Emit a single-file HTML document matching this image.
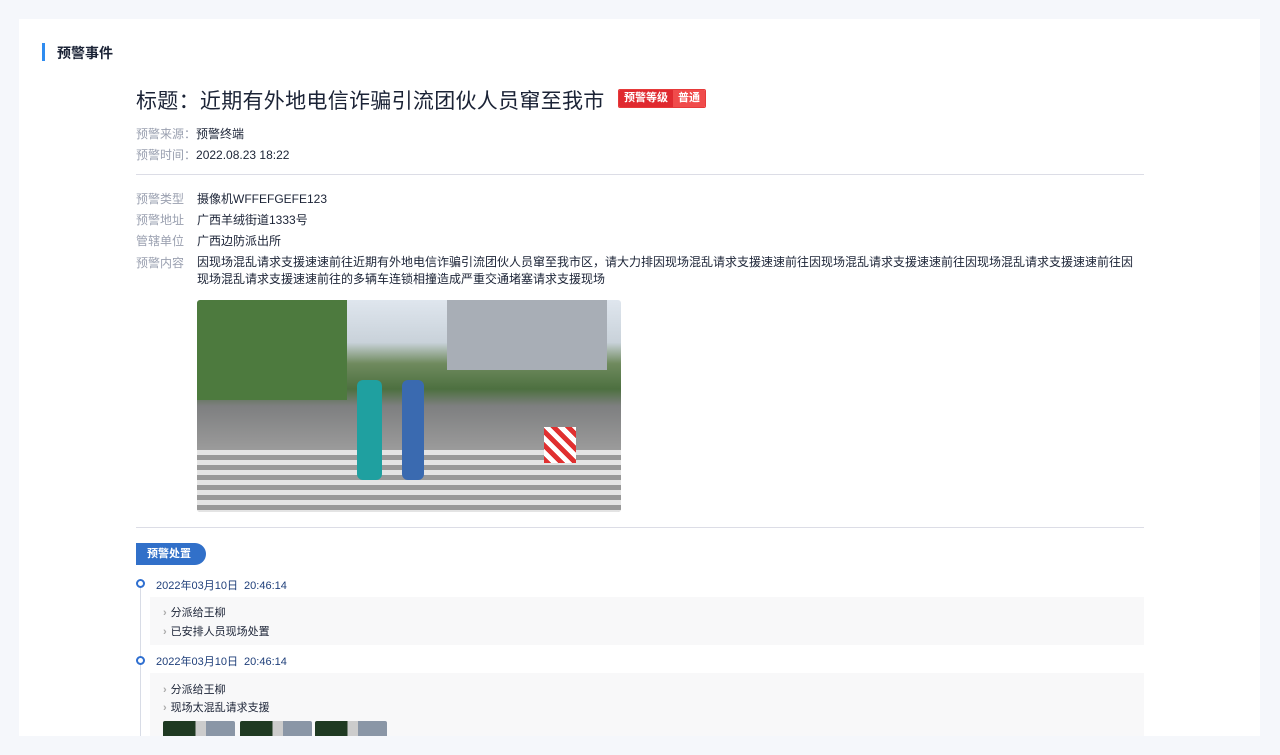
<!DOCTYPE html>
<html><head><meta charset="utf-8"><style>
*{margin:0;padding:0;box-sizing:border-box}
body{width:1280px;height:755px;background:#f5f7fb;font-family:"Liberation Sans","Noto Sans CJK SC",sans-serif;position:relative;overflow:hidden;color:#1b2336}
.card{position:absolute;left:19px;top:19px;width:1241px;height:717px;background:#fff}
.a{position:absolute;white-space:nowrap}
.lbl{color:#9aa0b0;font-size:12px}
.val{color:#1b2336;font-size:12px}
.hr{position:absolute;left:136px;width:1008px;height:1px;background:#dcdde6}
.tl{position:absolute;left:140px;width:1px;background:#d8dce6}
.dot{position:absolute;left:136px;width:9px;height:9px;border:2px solid #2f6fd0;border-radius:50%;background:#fff}
.box{position:absolute;left:150px;width:994px;background:#f8f8f9}
.it{position:absolute;left:163px;font-size:11px;color:#1b2336;white-space:nowrap}
.it:before{content:"›";color:#aaa;margin-right:4px;font-weight:bold}
.th{position:absolute;top:721px;width:72px;height:20px;background:linear-gradient(90deg,#1f3a22 0 45%,#ccc 45% 60%,#8a96a6 60%);border-radius:2px}
</style></head><body>
<div class="card"></div>
<div class="a" style="left:42px;top:43px;width:3px;height:18px;background:#2f8cf0"></div>
<div class="a" style="left:57px;top:43px;font-size:14px;color:#1b2336;font-weight:bold">预警事件</div>
<div class="a" style="left:136px;top:85px;font-size:21px;color:#1b2336;letter-spacing:0.3px">标题：近期有外地电信诈骗引流团伙人员窜至我市</div>
<div class="a" style="left:618px;top:89px;width:88px;height:19px;border:1px solid #e63a3a;border-radius:2px;display:flex;font-size:11px;color:#fff;line-height:17px;font-weight:bold;overflow:hidden">
<span style="background:#e0292f;padding:0 5px">预警等级</span><span style="background:#f04b4b;padding:0 5px;flex:1">普通</span></div>
<div class="a lbl" style="left:136px;top:125px">预警来源：<span class="val">预警终端</span></div>
<div class="a lbl" style="left:136px;top:146px">预警时间：<span class="val">2022.08.23 18:22</span></div>
<div class="hr" style="top:174px"></div>
<div class="a lbl" style="left:136px;top:190px">预警类型</div><div class="a val" style="left:197px;top:190px">摄像机WFFEFGEFE123</div>
<div class="a lbl" style="left:136px;top:211px">预警地址</div><div class="a val" style="left:197px;top:211px">广西羊绒街道1333号</div>
<div class="a lbl" style="left:136px;top:232px">管辖单位</div><div class="a val" style="left:197px;top:232px">广西边防派出所</div>
<div class="a lbl" style="left:136px;top:254px">预警内容</div>
<div class="a val" style="left:197px;top:254px;line-height:17px">因现场混乱请求支援速速前往近期有外地电信诈骗引流团伙人员窜至我市区，请大力排因现场混乱请求支援速速前往因现场混乱请求支援速速前往因现场混乱请求支援速速前往因<br>现场混乱请求支援速速前往的多辆车连锁相撞造成严重交通堵塞请求支援现场</div>
<div class="a" style="left:197px;top:300px;width:424px;height:212px;border-radius:3px;overflow:hidden;background:linear-gradient(180deg,#dfe6ee 0%,#c9d2da 20%,#6f8a5e 30%,#4d7040 42%,#7e7f80 50%,#9a9a9a 70%,#bdbdbd 100%)">
<div style="position:absolute;left:250px;top:0;width:160px;height:70px;background:#a8aeb6"></div>
<div style="position:absolute;left:0;top:0;width:150px;height:100px;background:#4d7a3e"></div>
<div style="position:absolute;left:0;top:150px;width:424px;height:62px;background:repeating-linear-gradient(180deg,#e4e4e4 0 5px,#999 5px 10px)"></div>
<div style="position:absolute;left:160px;top:80px;width:25px;height:100px;background:#1fa0a0;border-radius:6px"></div>
<div style="position:absolute;left:205px;top:80px;width:22px;height:100px;background:#3a6ab0;border-radius:6px"></div>
<div style="position:absolute;left:347px;top:127px;width:32px;height:36px;background:repeating-linear-gradient(45deg,#e03030 0 5px,#fff 5px 10px)"></div>
</div>
<div class="hr" style="top:527px"></div>
<div class="a" style="left:136px;top:543px;width:70px;height:22px;background:#3170c9;border-radius:0 11px 11px 0;color:#fff;font-size:11px;line-height:22px;padding-left:11px;font-weight:bold">预警处置</div>
<div class="tl" style="top:587px;height:168px"></div>
<div class="dot" style="top:579px"></div>
<div class="a" style="left:156px;top:577px;font-size:11px;color:#1f3f7a">2022年03月10日&nbsp;&nbsp;20:46:14</div>
<div class="box" style="top:597px;height:48px"></div>
<div class="it" style="top:604px">分派给王柳</div>
<div class="it" style="top:623px">已安排人员现场处置</div>
<div class="dot" style="top:656px"></div>
<div class="a" style="left:156px;top:653px;font-size:11px;color:#1f3f7a">2022年03月10日&nbsp;&nbsp;20:46:14</div>
<div class="box" style="top:673px;height:82px"></div>
<div class="it" style="top:681px">分派给王柳</div>
<div class="it" style="top:699px">现场太混乱请求支援</div>
<div class="th" style="left:163px"></div><div class="th" style="left:240px"></div><div class="th" style="left:315px"></div>
<div class="a" style="left:0;top:736px;width:1280px;height:19px;background:#f5f7fb"></div>
</body></html>
